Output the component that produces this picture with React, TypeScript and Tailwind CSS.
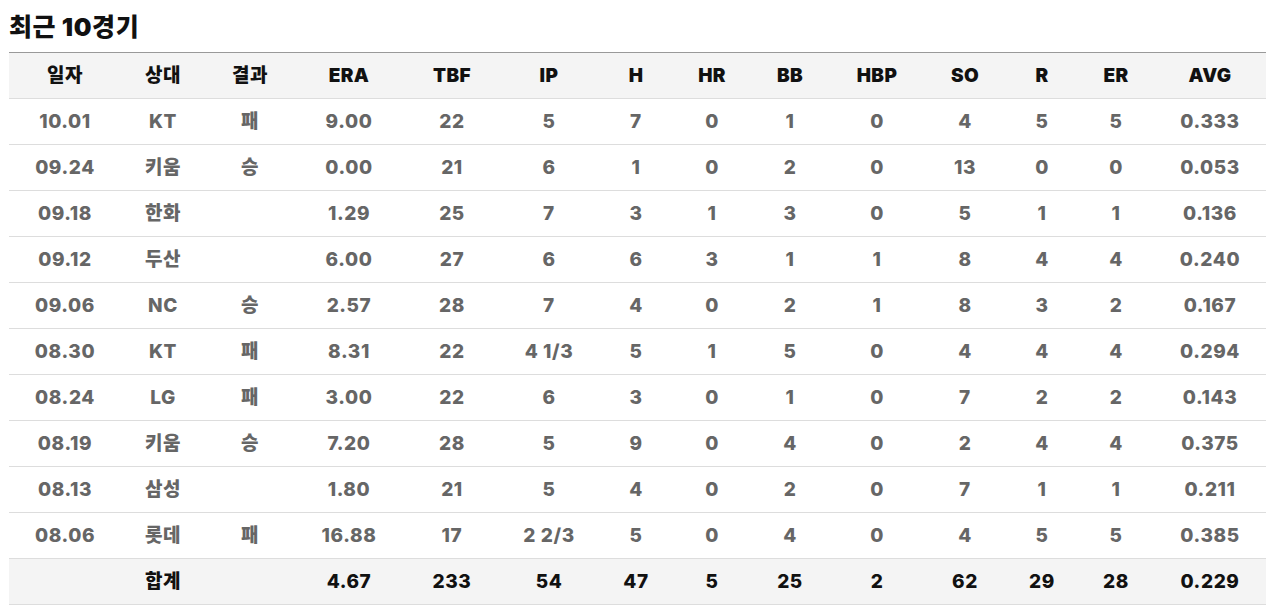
import React from "react";

const headers = ["일자", "상대", "결과", "ERA", "TBF", "IP", "H", "HR", "BB", "HBP", "SO", "R", "ER", "AVG"];
const rows: string[][] = [
  ["10.01", "KT", "패", "9.00", "22", "5", "7", "0", "1", "0", "4", "5", "5", "0.333"],
  ["09.24", "키움", "승", "0.00", "21", "6", "1", "0", "2", "0", "13", "0", "0", "0.053"],
  ["09.18", "한화", "", "1.29", "25", "7", "3", "1", "3", "0", "5", "1", "1", "0.136"],
  ["09.12", "두산", "", "6.00", "27", "6", "6", "3", "1", "1", "8", "4", "4", "0.240"],
  ["09.06", "NC", "승", "2.57", "28", "7", "4", "0", "2", "1", "8", "3", "2", "0.167"],
  ["08.30", "KT", "패", "8.31", "22", "4 1/3", "5", "1", "5", "0", "4", "4", "4", "0.294"],
  ["08.24", "LG", "패", "3.00", "22", "6", "3", "0", "1", "0", "7", "2", "2", "0.143"],
  ["08.19", "키움", "승", "7.20", "28", "5", "9", "0", "4", "0", "2", "4", "4", "0.375"],
  ["08.13", "삼성", "", "1.80", "21", "5", "4", "0", "2", "0", "7", "1", "1", "0.211"],
  ["08.06", "롯데", "패", "16.88", "17", "2 2/3", "5", "0", "4", "0", "4", "5", "5", "0.385"],
];
const total = ["", "합계", "", "4.67", "233", "54", "47", "5", "25", "2", "62", "29", "28", "0.229"];

const grid = "grid grid-cols-[112px_84px_90px_108px_98px_96px_78px_74px_82px_92px_84px_70px_78px_110px]";

export default function App() {
  return (
    <div
      className="w-[1270px] h-[615px] bg-white px-[9px] overflow-hidden"
      style={{ fontFamily: "Inter, 'Noto Sans CJK KR', sans-serif" }}
    >
      <h2 className="h-[52px] pt-[12px] text-[25px] leading-[30px] font-black text-[#111] tracking-[0.6px]">
        최근 10경기
      </h2>
      <div className="w-[1257px] border-t border-[#999]">
        <div className={`${grid} h-[46px] pt-[2px] bg-[#f4f4f4] border-b border-[#ddd] items-center text-[19px] tracking-[0.4px] font-black text-[#111]`}>
          {headers.map((h, i) => (
            <div key={i} className="text-center">{h}</div>
          ))}
        </div>
        {rows.map((r, ri) => (
          <div key={ri} className={`${grid} h-[46px] pt-[2px] border-b border-[#ddd] items-center text-[19px] tracking-[0.6px] font-extrabold text-[#666]`}>
            {r.map((c, ci) => (
              <div key={ci} className="text-center">{c}</div>
            ))}
          </div>
        ))}
        <div className={`${grid} h-[46px] pt-[2px] bg-[#f4f4f4] border-b border-[#ddd] items-center text-[19px] tracking-[0.6px] font-extrabold text-[#111]`}>
          {total.map((c, ci) => (
            <div key={ci} className="text-center">{c}</div>
          ))}
        </div>
      </div>
    </div>
  );
}
